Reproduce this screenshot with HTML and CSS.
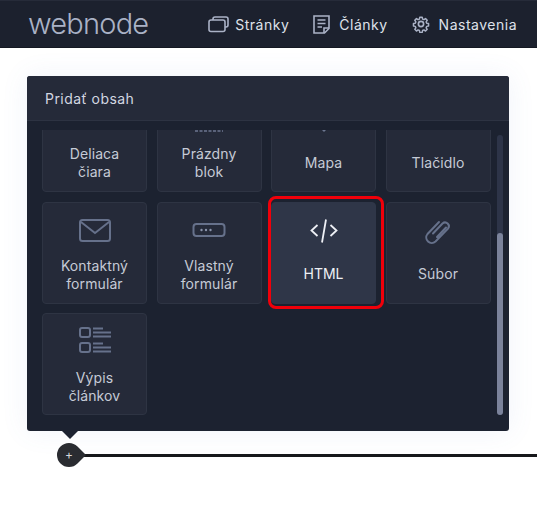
FILE: index.html
```html
<!DOCTYPE html>
<html lang="sk">
<head>
<meta charset="utf-8">
<title>Webnode</title>
<link rel="stylesheet" href="styles.css">
</head>
<body>
<header class="topbar">
  <div class="logo">webnode</div>
  <nav class="nav">
    <a class="nav-item">
      <svg class="nav-icon" width="21" height="18" viewBox="0 0 21 18" fill="none" stroke="currentColor" stroke-width="1.6"><path d="M5 5V4a2 2 0 0 1 2-2h11a2 2 0 0 1 2 2v6a2 2 0 0 1-2 2h-1"/><rect x="1" y="5" width="16" height="11.500" rx="2"/></svg>
      <span>Stránky</span>
    </a>
    <a class="nav-item nav-item-wide">
      <svg class="nav-icon" width="17" height="19" viewBox="0 0 17 19" fill="none" stroke="currentColor" stroke-width="1.600"><path d="M1 1h15v12.500L11.500 18H1z"/><path d="M11 18v-5h5M4.500 5h8M4.500 8.500h8M4.500 12h4.500"/></svg>
      <span>Články</span>
    </a>
    <a class="nav-item nav-item-wide">
      <svg class="nav-icon" width="18" height="18" viewBox="0 0 24 24" fill="none" stroke="currentColor" stroke-width="2.200" stroke-linejoin="round"><circle cx="12" cy="12" r="3.500"/><path d="M10.200 2h3.600l.5 2.700 2.100.9 2.300-1.600 2.500 2.500-1.600 2.300.9 2.100 2.700.5v3.600l-2.700.5-.9 2.100 1.600 2.300-2.500 2.500-2.300-1.600-2.100.9-.5 2.700h-3.600l-.5-2.700-2.100-.9-2.300 1.600-2.500-2.500 1.600-2.300-.9-2.100-2.700-.5v-3.600l2.700-.5.9-2.100-1.600-2.300 2.500-2.500 2.300 1.600 2.100-.9z" transform="translate(1.200 1.200) scale(.9)"/></svg>
      <span>Nastavenia</span>
    </a>
  </nav>
</header>

<main class="stage">
  <section class="panel">
    <h2 class="panel-title">Pridať obsah</h2>
    <div class="panel-body">
      <div class="scroll-view">
        <div class="grid">
          <div class="card card-text">
            <span class="card-label">Deliaca<br>čiara</span>
          </div>
          <div class="card card-text">
            <svg class="peek peek-blank" width="28" height="2" viewBox="0 0 28 2"><path d="M0 1h28" stroke="#6c7690" stroke-width="1.500" stroke-dasharray="3 1.500"/></svg>
            <span class="card-label">Prázdny<br>blok</span>
          </div>
          <div class="card card-text card-single">
            <svg class="peek peek-pin" width="8" height="4" viewBox="0 0 8 4"><path d="M0 0h8L4 4z" fill="#6c7690"/></svg>
            <span class="card-label">Mapa</span>
          </div>
          <div class="card card-text card-single">
            <span class="card-label">Tlačidlo</span>
          </div>

          <div class="card">
            <svg class="card-icon" width="34" height="28" viewBox="0 0 34 28" fill="none" stroke="#66718b" stroke-width="2"><rect x="2" y="2" width="30" height="21" rx="2.500"/><path d="M3 4l14 11L31 4"/></svg>
            <span class="card-label">Kontaktný<br>formulár</span>
          </div>
          <div class="card">
            <svg class="card-icon" width="34" height="28" viewBox="0 0 34 28" fill="none"><rect x="1.500" y="6" width="31" height="12" rx="3" stroke="#66718b" stroke-width="2"/><circle cx="9.500" cy="12" r="1.200" fill="#8a93aa"/><circle cx="14" cy="12" r="1.200" fill="#8a93aa"/><circle cx="18.500" cy="12" r="1.200" fill="#8a93aa"/></svg>
            <span class="card-label">Vlastný<br>formulár</span>
          </div>
          <div class="card card-active">
            <svg class="card-icon" width="34" height="28" viewBox="0 0 34 28" fill="none" stroke="#eef0f5" stroke-width="1.800"><path d="M10.500 7L4.500 12.500 10.500 18M23.500 7l6 5.500-6 5.500M19 1.500l-4 23"/></svg>
            <span class="card-label">HTML</span>
          </div>
          <div class="card card-file">
            <svg class="card-icon" width="34" height="28" viewBox="0 0 34 28" fill="none" stroke="#66718b" stroke-width="2" stroke-linecap="round"><path d="M12 15.500l9.500-10a3.800 3.800 0 0 1 5.500 5.200L14.500 23.500a5.500 5.500 0 0 1-8-7.500L18 4M16 19l9-9.500"/></svg>
            <span class="card-label">Súbor</span>
          </div>

          <div class="card card-list">
            <svg class="card-icon" width="34" height="28" viewBox="0 0 34 28" fill="none" stroke="#66718b"><rect x="2" y="2" width="10" height="9" rx="2" stroke-width="2"/><rect x="2" y="17" width="10" height="9" rx="2" stroke-width="2"/><path d="M15 2.500h10M15 6.500h18M15 10.500h18M15 17.500h10M15 21.500h18M15 25.500h18" stroke-width="1.800"/></svg>
            <span class="card-label">Výpis<br>článkov</span>
          </div>
        </div>
      </div>
      <div class="scrollbar"><div class="scrollbar-thumb"></div></div>
    </div>
    <div class="panel-arrow"></div>
  </section>

  <div class="add-line">
    <div class="add-drop"><span>+</span></div>
    <div class="line"></div>
  </div>
</main>
</body>
</html>
```

FILE: styles.css
```css
* { box-sizing: border-box; }

html, body {
  margin: 0;
  height: 100%;
  overflow: hidden;
  background: #fff;
  font-family: "Inter", "Liberation Sans", sans-serif;
}

.topbar {
  height: 48px;
  background: #1c212e;
  border-top: 1px solid #262b39;
  border-bottom: 1px solid #141822;
  display: flex;
  align-items: center;
  justify-content: space-between;
  padding: 0 20px 0 28px;
}

.logo {
  font-family: "Inter", sans-serif;
  font-weight: 300;
  font-size: 29px;
  letter-spacing: -0.8px;
  line-height: 1;
  color: #aab2c6;
  margin-top: -1px;
}

.nav {
  display: flex;
  align-items: center;
  gap: 24px;
}

.nav-item {
  display: flex;
  align-items: center;
  gap: 6px;
  font-size: 14px;
  letter-spacing: 0.5px;
  color: #dfe2ea;
}

.nav-item-wide {
  gap: 9px;
}

.nav-icon {
  color: #aab2c6;
  flex: none;
}

.stage {
  padding: 28px 28px 0 27px;
}

.panel {
  position: relative;
  width: 482px;
  height: 355px;
  background: #1c2230;
  border-radius: 3px;
  box-shadow: 0 0 28px rgba(90, 120, 200, 0.09);
}

.panel-title {
  margin: 0;
  height: 45px;
  padding: 0 18px;
  display: flex;
  align-items: center;
  background: #252a39;
  border-radius: 3px 3px 0 0;
  border-bottom: 1px solid #2d3342;
  font-size: 14px;
  font-weight: 400;
  letter-spacing: 0.45px;
  color: #d3d7e1;
}

.panel-body {
  position: relative;
  height: 310px;
  padding: 9px 0 0 15px;
}

.scroll-view {
  height: 301px;
  overflow: hidden;
}

.grid {
  display: grid;
  grid-template-columns: repeat(4, 105px);
  grid-auto-rows: 102px;
  column-gap: 9.500px;
  row-gap: 9.500px;
  margin-top: -40px;
}

.card {
  position: relative;
  display: flex;
  flex-direction: column;
  align-items: center;
  padding-top: 15px;
  background: #252a39;
  border: 1px solid #2e3443;
  border-radius: 4px;
  text-align: center;
}

.card-text {
  justify-content: flex-end;
  padding: 0 0 10px;
}

.card-single {
  padding-bottom: 19px;
}

.card-icon {
  flex: none;
}

.card-label {
  margin-top: 11px;
  font-size: 14px;
  line-height: 18px;
  letter-spacing: 0.1px;
  color: #c5cad6;
}

.card-text .card-label {
  margin-top: 0;
}

.card-active {
  background: #2f3648;
  border-color: #2f3648;
}

.card-active .card-label {
  margin-top: 19px;
  letter-spacing: 0;
  color: #eef0f5;
}

.card-file .card-label {
  margin-top: 19px;
}

.card-list {
  padding-top: 12px;
}

.card-list .card-label {
  margin-top: 15px;
}

/* Red highlight drawn over the card */
.card-active::after {
  content: "";
  position: absolute;
  inset: -7px -9px -6px -4.500px;
  border: 3px solid #f0000a;
  border-radius: 8px;
}

.peek {
  position: absolute;
  top: 39px;
  left: 50%;
  transform: translateX(-50%);
}

.peek-pin {
  top: 37px;
}

.scrollbar {
  position: absolute;
  top: 14px;
  right: 6px;
  width: 6px;
  height: 280px;
  border-radius: 3px;
  background: #2d3448;
}

.scrollbar-thumb {
  position: absolute;
  left: 0;
  right: 0;
  bottom: 0;
  height: 182px;
  border-radius: 3px;
  background: #7b839b;
}

.panel-arrow {
  position: absolute;
  left: 35px;
  bottom: -8px;
  width: 0;
  height: 0;
  border-left: 8px solid transparent;
  border-right: 8px solid transparent;
  border-top: 8px solid #1c2230;
}

.add-line {
  display: flex;
  align-items: center;
  margin: 12px -28px 0 30px;
}

.add-drop {
  position: relative;
  z-index: 1;
  flex: none;
  width: 24px;
  height: 24px;
  border-radius: 50% 0 50% 50%;
  background: #2a2c31;
  transform: rotate(45deg);
  display: flex;
  align-items: center;
  justify-content: center;
}

.add-drop span {
  transform: rotate(-45deg);
  color: #d6d8dc;
  font-size: 12px;
  line-height: 1;
}

.line {
  flex: 1;
  height: 3px;
  background: #17181b;
}
```
